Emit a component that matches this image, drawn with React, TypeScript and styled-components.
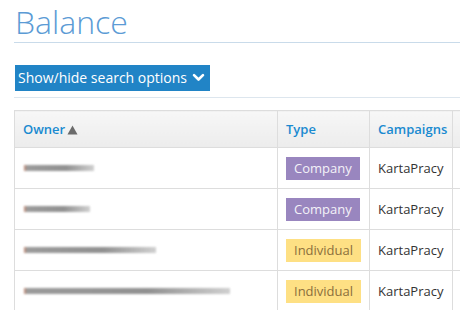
import React from "react";
import styled, { createGlobalStyle } from "styled-components";

const GlobalStyle = createGlobalStyle`
  html, body {
    margin: 0;
    padding: 0;
    background: #fff;
    font-family: "Open Sans", "Liberation Sans", sans-serif;
  }
  * { box-sizing: border-box; }
`;

type Row = { owner: number; type: "Company" | "Individual"; campaign: string };

const rows: Row[] = [
  { owner: 70, type: "Company", campaign: "KartaPracy" },
  { owner: 66, type: "Company", campaign: "KartaPracy" },
  { owner: 132, type: "Individual", campaign: "KartaPracy" },
  { owner: 206, type: "Individual", campaign: "KartaPracy" },
];

const App: React.FC = () => (
  <>
    <GlobalStyle />
    <Page>
      <Title>Balance</Title>
      <Toolbar>
        <ToggleButton type="button">
          Show/hide search options
          <svg width="13" height="13" viewBox="0 0 16 16" aria-hidden>
            <path d="M2.5 5 L8 10.5 L13.5 5" fill="none" stroke="#fff" strokeWidth="3.2" strokeLinecap="round" strokeLinejoin="round" />
          </svg>
        </ToggleButton>
      </Toolbar>
      <Table>
        <thead>
          <tr>
            <Th $w={263}>
              Owner
              <SortArrow width="11" height="10" viewBox="0 0 11 10" aria-hidden>
                <path d="M5.5 0.5 L10.5 9.5 L0.5 9.5 Z" fill="#6b6b6b" />
              </SortArrow>
            </Th>
            <Th $w={92}>Type</Th>
            <Th $w={83}>Campaigns</Th>
            <Th $w={40} />
          </tr>
        </thead>
        <tbody>
          {rows.map((r, i) => (
            <tr key={i}>
              <Td>
                <Blurred style={{ width: r.owner }} />
              </Td>
              <Td>
                <Badge $kind={r.type}>{r.type}</Badge>
              </Td>
              <Td>{r.campaign}</Td>
              <Td />
            </tr>
          ))}
        </tbody>
      </Table>
    </Page>
  </>
);

const Page = styled.div`
  width: 460px;
  height: 310px;
  overflow: hidden;
  padding-left: 14px;
`;

const Title = styled.h1`
  margin: 0;
  padding: 3px 0 0 1px;
  height: 43px;
  font-size: 32px;
  font-weight: 300;
  line-height: 38px;
  color: #5b9bd5;
  border-bottom: 1px solid #c9dbea;
`;

const Toolbar = styled.div`
  padding: 22px 0 6px 1px;
  border-bottom: 1px solid #dde6ee;
  margin-bottom: 12px;
`;

const ToggleButton = styled.button`
  display: inline-flex;
  align-items: center;
  gap: 5px;
  height: 26px;
  padding: 0 5px 1px 3px;
  border: none;
  background: #2184c6;
  color: #fff;
  font-family: "Open Sans", "Liberation Sans", sans-serif;
  font-size: 14px;
  cursor: pointer;
`;

const Table = styled.table`
  border-collapse: collapse;
  table-layout: fixed;
  width: 478px;
  font-size: 13px;
  color: #333;
`;

const Th = styled.th<{ $w?: number }>`
  width: ${(p) => (p.$w ? `${p.$w}px` : "auto")};
  height: 37px;
  padding: 0 8px;
  text-align: left;
  font-weight: 600;
  color: #1a8ad0;
  background: linear-gradient(#f7f7f7, #ececec);
  border: 1px solid #dddddd;
  white-space: nowrap;
`;

const SortArrow = styled.svg`
  margin-left: 2px;
  vertical-align: -1px;
`;

const Td = styled.td`
  height: 41px;
  padding: 0 8px;
  border: 1px solid #dddddd;
  white-space: nowrap;
`;

const Blurred = styled.div`
  height: 6px;
  margin-left: 1px;
  background: linear-gradient(90deg, #c07a60 0, #8a8a8a 3px, #7e7e7e 60%, #c8c8c8 100%);
  filter: blur(0.8px);
  opacity: 0.85;
`;

const Badge = styled.span<{ $kind: "Company" | "Individual" }>`
  display: inline-block;
  padding: 2px 8px 3px;
  font-size: 13px;
  background: ${(p) => (p.$kind === "Company" ? "#9986bf" : "#fee084")};
  color: ${(p) => (p.$kind === "Company" ? "#f4f2f8" : "#8b6f3c")};
`;

export default App;
